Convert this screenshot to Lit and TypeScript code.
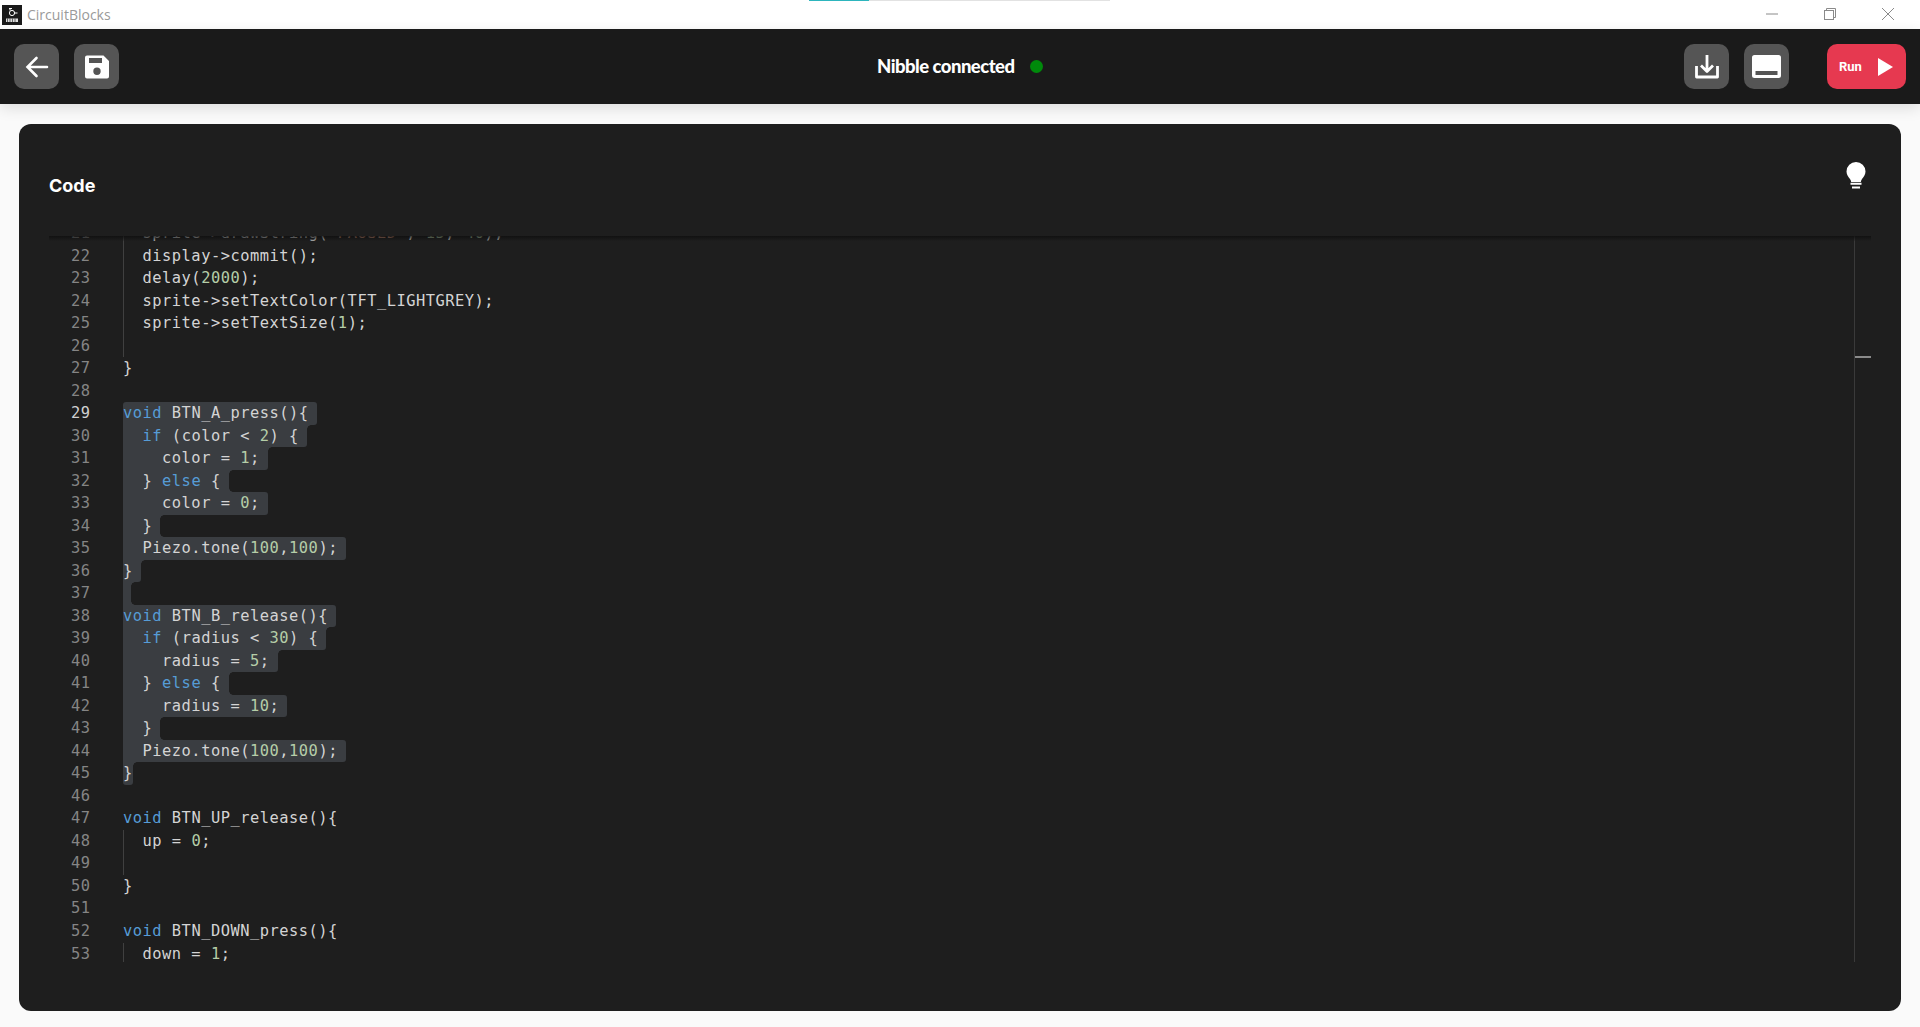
import { LitElement, html, css } from "lit";
import { customElement } from "lit/decorators.js";

type Seg = [string, string?];
interface Line { n: number; segs: Seg[]; selected?: boolean; noEol?: boolean; guide?: boolean }

const k = (s: string): Seg => [s, "kw"];
const d = (s: string): Seg => [s, "num"];
const t = (s: string): Seg => [s];
const st = (s: string): Seg => [s, "str"];

const LINES: Line[] = [
  { n: 21, guide: true, segs: [t('  sprite->drawString('), st('"PAUSED"'), t(', '), d("15"), t(', '), d("40"), t(');')] },
  { n: 22, guide: true, segs: [t("  display->commit();")] },
  { n: 23, guide: true, segs: [t("  delay("), d("2000"), t(");")] },
  { n: 24, guide: true, segs: [t("  sprite->setTextColor(TFT_LIGHTGREY);")] },
  { n: 25, guide: true, segs: [t("  sprite->setTextSize("), d("1"), t(");")] },
  { n: 26, guide: true, segs: [] },
  { n: 27, segs: [t("}")] },
  { n: 28, segs: [] },
  { n: 29, selected: true, segs: [k("void"), t(" BTN_A_press(){")] },
  { n: 30, selected: true, segs: [t("  "), k("if"), t(" (color < "), d("2"), t(") {")] },
  { n: 31, selected: true, segs: [t("    color = "), d("1"), t(";")] },
  { n: 32, selected: true, segs: [t("  } "), k("else"), t(" {")] },
  { n: 33, selected: true, segs: [t("    color = "), d("0"), t(";")] },
  { n: 34, selected: true, segs: [t("  }")] },
  { n: 35, selected: true, segs: [t("  Piezo.tone("), d("100"), t(","), d("100"), t(");")] },
  { n: 36, selected: true, segs: [t("}")] },
  { n: 37, selected: true, segs: [] },
  { n: 38, selected: true, segs: [k("void"), t(" BTN_B_release(){")] },
  { n: 39, selected: true, segs: [t("  "), k("if"), t(" (radius < "), d("30"), t(") {")] },
  { n: 40, selected: true, segs: [t("    radius = "), d("5"), t(";")] },
  { n: 41, selected: true, segs: [t("  } "), k("else"), t(" {")] },
  { n: 42, selected: true, segs: [t("    radius = "), d("10"), t(";")] },
  { n: 43, selected: true, segs: [t("  }")] },
  { n: 44, selected: true, segs: [t("  Piezo.tone("), d("100"), t(","), d("100"), t(");")] },
  { n: 45, selected: true, noEol: true, segs: [t("}")] },
  { n: 46, segs: [] },
  { n: 47, segs: [k("void"), t(" BTN_UP_release(){")] },
  { n: 48, guide: true, segs: [t("  up = "), d("0"), t(";")] },
  { n: 49, guide: true, segs: [] },
  { n: 50, segs: [t("}")] },
  { n: 51, segs: [] },
  { n: 52, segs: [k("void"), t(" BTN_DOWN_press(){")] },
  { n: 53, guide: true, segs: [t("  down = "), d("1"), t(";")] },
];

const CH = 9.77;
const EOL = 8;
const GUTTER = 74;

const selWidth = (l?: Line) => {
  if (!l || !l.selected) return 0;
  const chars = l.segs.reduce((a, [s]) => a + s.length, 0);
  return chars * CH + (l.noEol ? 0 : EOL);
};

@customElement("app-root")
export class AppRoot extends LitElement {
  static styles = css`
    :host { display: flex; flex-direction: column; width: 1920px; height: 1027px; background: #fafafa; overflow: hidden; font-family: "Open Sans", sans-serif; }
    .titlebar { height: 29px; flex: none; background: #fff; display: flex; align-items: center; position: relative; }
    .progress { position: absolute; left: 809px; top: 0; width: 301px; height: 1px; background: #e2e2e2; }
    .progress i { display: block; width: 60px; height: 1px; background: #2db5bd; }
    .logo { width: 20px; height: 20px; margin: 0 5px 0 2px; flex: none; }
    .apptitle { font-size: 14px; color: #9a9a9a; font-family: "Open Sans", sans-serif; margin-top: -1px; }
    .winctl { margin-left: auto; display: flex; gap: 46px; padding-right: 26px; align-items: center; }
    .winctl svg { display: block; width: 12px; height: 12px; margin-top: -2px; }
    .toolbar { height: 75px; flex: none; background: #1a1a1a; display: flex; align-items: center; padding: 0 14px; box-shadow: 0 4px 14px rgba(0,0,0,.12); position: relative; z-index: 1; }
    .group { display: flex; gap: 15px; }
    .btn { width: 45px; height: 45px; border-radius: 10px; background: #555; display: flex; align-items: center; justify-content: center; }
    .status { position: absolute; left: 877px; top: -1px; height: 75px; display: flex; align-items: center; gap: 15px; font-family: Lato, sans-serif; font-weight: 900; font-size: 18.5px; letter-spacing: -0.52px; color: #fff; }
    .dot { width: 13px; height: 13px; border-radius: 50%; background: #008a0b; margin-top: 2px; }
    .right { margin-left: auto; display: flex; align-items: center; }
    .run { margin-left: 38px; width: 79px; height: 45px; border-radius: 10px; background: #e63950; display: flex; align-items: center; color: #fff; font-family: Roboto, sans-serif; font-weight: 700; font-size: 13px; padding: 0 13px 0 12px; box-sizing: border-box; justify-content: space-between; }
    .main { flex: none; margin: 20px 19px 0; height: 887px; border-radius: 12px; background: #1e1e1e; display: flex; flex-direction: column; padding: 0 0 0 30px; box-sizing: border-box; }
    .head { height: 112px; flex: none; display: flex; align-items: flex-start; justify-content: space-between; padding-right: 35px; }
    .head h2 { margin: 50px 0 0; font-family: Inter, sans-serif; font-weight: 700; font-size: 18px; line-height: 24px; color: #fff; letter-spacing: 0; }
    .bulb { margin-top: 38px; width: 20px; height: 27px; }
    .editor { position: relative; height: 726px; width: 1822px; overflow: hidden; }
    .shadow { position: absolute; left: 0; top: 0; right: 0; height: 5px; background: linear-gradient(rgba(14,14,14,.8), rgba(30,30,30,.25)); z-index: 3; }
    .scroller { margin-top: -14px; }
    .line { position: relative; height: 22.53px; display: flex; font-family: "DejaVu Sans Mono", monospace; font-size: 15.4px; letter-spacing: 0.5px; line-height: 22.53px; white-space: pre; color: #d4d4d4; }
    .ln { width: 74px; flex: none; box-sizing: border-box; padding-left: 22px; color: #858585; }
    .ln.active { color: #d0d0d0; }
    .code { position: relative; z-index: 1; }
    .kw { color: #569cd6; }
    .num { color: #b5cea8; }
    .str { color: #ce9178; }
    .sel { position: absolute; left: 74px; top: 0; height: 100%; background: #3a3d41; }
    .cc { position: absolute; width: 4px; height: 4px; }
    .cc.t { top: 0; background: radial-gradient(circle at 100% 100%, transparent 3.5px, #3a3d41 4px); }
    .cc.b { bottom: 0; background: radial-gradient(circle at 100% 0, transparent 3.5px, #3a3d41 4px); }
    .guide { position: absolute; left: 74px; top: 0; bottom: 0; width: 1px; background: #404040; }
    .ruler { position: absolute; left: 1805px; top: 0; bottom: 0; width: 1px; background: #3a3a3a; z-index: 2; }
    .mark { position: absolute; left: 1806px; top: 120px; width: 16px; height: 2px; background: #8a8a8a; z-index: 2; }
  `;

  private sel(l: Line, i: number) {
    if (!l.selected) return null;
    const w = selWidth(l);
    const prev = selWidth(LINES[i - 1]);
    const next = selWidth(LINES[i + 1]);
    const tr = prev < w ? 3 : 0;
    const br = next < w ? 3 : 0;
    const tl = prev ? 0 : 3;
    const bl = next ? 0 : 3;
    const x = GUTTER + w;
    return html`
      <div class="sel" style="width:${w}px;border-radius:${tl}px ${tr}px ${br}px ${bl}px"></div>
      ${prev > w ? html`<div class="cc t" style="left:${x}px"></div>` : null}
      ${next > w ? html`<div class="cc b" style="left:${x}px"></div>` : null}
    `;
  }

  render() {
    return html`
      <div class="titlebar">
        <div class="progress"><i></i></div>
        <svg class="logo" viewBox="0 0 20 20">
          <rect width="20" height="20" fill="#1a1a1a"/>
          <circle cx="10" cy="8" r="2.6" fill="none" stroke="#fff" stroke-width="1"/>
          <path d="M7 3.500h3M8 3.500v2M12.500 8h3" stroke="#fff" stroke-width="1" fill="none"/>
          <rect x="4" y="13.500" width="12" height="3.500" fill="#ddd"/>
          <path d="M5.500 13.500v3.500M8 13.500v3.500M10.500 13.500v3.500M13 13.500v3.500" stroke="#1a1a1a" stroke-width=".6"/>
        </svg>
        <span class="apptitle">CircuitBlocks</span>
        <div class="winctl">
          <svg viewBox="0 0 12 12"><path d="M0 6h12" stroke="#8a8a8a" stroke-width="1"/></svg>
          <svg viewBox="0 0 12 12" fill="none" stroke="#8a8a8a"><rect x=".5" y="2.500" width="9" height="9"/><path d="M2.500 2.500V.5h9v9h-2"/></svg>
          <svg viewBox="0 0 12 12" fill="none" stroke="#8a8a8a"><path d="M0 0l12 12M12 0L0 12"/></svg>
        </div>
      </div>
      <div class="toolbar">
        <div class="group">
          <div class="btn">
            <svg width="24" height="24" viewBox="0 0 24 24" fill="none" stroke="#fff" stroke-width="2.600" stroke-linecap="round"><path d="M22 12H3M11.500 3L2.500 12l9 9"/></svg>
          </div>
          <div class="btn">
            <svg width="24" height="24" viewBox="0 0 24 24"><path fill="#fff" fill-rule="evenodd" d="M2 .5h16.500L24 6v15.500a2 2 0 0 1-2 2H2a2 2 0 0 1-2-2V2.500a2 2 0 0 1 2-2zM4 3v5h13V3zM12 12.500a3.700 3.700 0 1 0 0 7.400 3.700 3.700 0 0 0 0-7.400z"/></svg>
          </div>
        </div>
        <div class="status"><span>Nibble connected</span><span class="dot"></span></div>
        <div class="right">
          <div class="group">
            <div class="btn">
              <svg width="24" height="24" viewBox="0 0 24 24" fill="none" stroke="#fff" stroke-width="2.800" stroke-linejoin="round"><path d="M12 0v16M6 10.500l6 6 6-6"/><path d="M1.500 11v11h21V11"/></svg>
            </div>
            <div class="btn">
              <svg width="29" height="23" viewBox="0 0 29 23"><path fill="#fff" fill-rule="evenodd" d="M2.500 0h24A2.500 2.500 0 0 1 29 2.500v18a2.500 2.500 0 0 1-2.500 2.500h-24A2.500 2.500 0 0 1 0 20.500v-18A2.500 2.500 0 0 1 2.500 0zM3.500 16v4h22v-4z"/></svg>
            </div>
          </div>
          <div class="run">
            <span>Run</span>
            <svg width="15" height="18" viewBox="0 0 15 18"><path fill="#fff" d="M0 0l15 9L0 18z"/></svg>
          </div>
        </div>
      </div>
      <div class="main">
        <div class="head">
          <h2>Code</h2>
          <svg class="bulb" viewBox="0 0 20 27">
            <path fill="#fff" d="M10 0a9.500 9.500 0 0 1 9.500 9.500c0 3.500-2 5.500-3.500 7.500-.7 1-1 2-1.200 3H5.200C5 19 4.700 18 4 17 2.500 15 .5 13 .5 9.500A9.500 9.500 0 0 1 10 0z"/>
            <path d="M4.500 20.800h11v2h-11zM6 24.500h8V26.500H6z" fill="#fff"/>
          </svg>
        </div>
        <div class="editor">
          <div class="shadow"></div>
          <div class="scroller">
            ${LINES.map((l, i) => html`
              <div class="line">
                ${this.sel(l, i)}
                ${l.guide ? html`<div class="guide"></div>` : null}
                <span class="ln ${l.n === 29 ? "active" : ""}">${l.n}</span>
                <span class="code">${l.segs.map(([s, c]) => c ? html`<span class=${c}>${s}</span>` : s)}</span>
              </div>
            `)}
          </div>
          <div class="ruler"></div>
          <div class="mark"></div>
        </div>
      </div>
    `;
  }
}
